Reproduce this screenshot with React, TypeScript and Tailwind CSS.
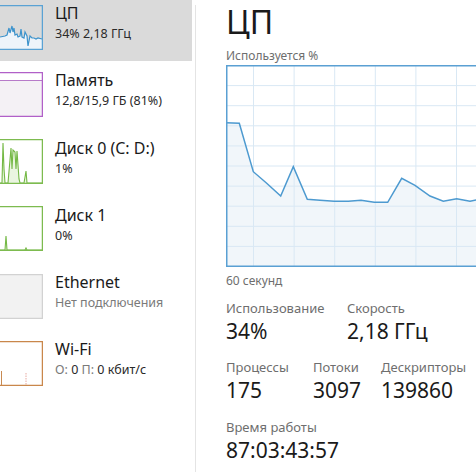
import type React from "react";

const font = { fontFamily: '"Noto Sans", "Open Sans", sans-serif' };

// sidebar sparkline for the CPU tile
const cpuSpark =
  "0,32 5,31 7,30 9,23 10,28 12,21 13,27 14,23 15,30 17,29 18,32 20,31 21,24 22,32 24,33 25,27 27,31 28,41 29,36 30,31 32,33 34,33 36,34 38,33 42,34";

// main CPU history, x/y inside the chart box
const cpuHistory: [number, number][] = [
  [0, 57.7], [13.3, 58.3], [27.3, 106.7], [40.7, 118.3], [54.7, 131], [67.3, 101.7],
  [81.3, 134.3], [94, 135.3], [108.3, 136.3], [122.3, 136.3], [135, 135.3],
  [148.3, 137.3], [161.7, 137.3], [175.7, 113.3], [189, 120.3], [204, 131],
  [217.3, 136.3], [230.7, 133.7], [244, 136.3], [257.3, 133.5], [270, 134],
];

const CpuThumb = () => (
  <svg width="43" height="45" className="block">
    <polygon points={`0,45 ${cpuSpark} 42,45`} fill="#eef4fa" />
    <polyline points={cpuSpark} fill="none" stroke="#3d93cc" strokeWidth="1.2" />
    <path d="M0 0.5H42.5V44.5H0" fill="none" stroke="#5aa2d4" strokeWidth="1.5" />
  </svg>
);

const MemThumb = () => (
  <svg width="43" height="45" className="block">
    <rect x="0" y="8.5" width="42" height="36" fill="#f4f1f5" />
    <line x1="0" y1="8.5" x2="42" y2="8.5" stroke="#b77bc9" strokeWidth="1" />
    <path d="M0 0.5H42.5V44.5H0" fill="none" stroke="#b160c8" strokeWidth="1.5" />
  </svg>
);

const DiskThumb = ({ spikes }: { spikes: string }) => (
  <svg width="43" height="45" className="block">
    <polygon points={`0,44 ${spikes} 42,44`} fill="#eaf5e0" />
    <polyline points={spikes} fill="none" stroke="#74b845" strokeWidth="1.1" />
    <path d="M0 0.5H42.5V44.5H0" fill="none" stroke="#7dbb4f" strokeWidth="1.5" />
  </svg>
);

const EthThumb = () => (
  <svg width="43" height="45" className="block">
    <rect x="0" y="0" width="42" height="44" fill="#f2f2f2" />
    <path d="M0 0.5H42.5V44.5H0" fill="none" stroke="#d2d2d2" strokeWidth="1.5" />
  </svg>
);

const WifiThumb = () => (
  <svg width="43" height="45" className="block">
    <line x1="1.5" y1="30" x2="1.5" y2="44" stroke="#c88a52" strokeWidth="1" />
    <line x1="26" y1="32" x2="26" y2="44" stroke="#e7a9a0" strokeWidth="1" strokeDasharray="1.5 1" />
    <path d="M0 0.5H42.5V44.5H0" fill="none" stroke="#c9874b" strokeWidth="1.5" />
  </svg>
);

type Tile = {
  thumb: React.ReactNode;
  title: string;
  sub: React.ReactNode;
  selected?: boolean;
};

const tiles: Tile[] = [
  { thumb: <CpuThumb />, title: "ЦП", sub: "34% 2,18 ГГц", selected: true },
  { thumb: <MemThumb />, title: "Память", sub: "12,8/15,9 ГБ (81%)" },
  {
    thumb: <DiskThumb spikes="0,44 2,44 3,4 4,30 5,44 8,44 11,9 12,30 13,11 15,13 16,30 17,12 19,40 20,44 24,44 26,32 27,44 42,44" />,
    title: "Диск 0 (C: D:)",
    sub: "1%",
  },
  {
    thumb: <DiskThumb spikes="0,44 5,44 6,30 7,44 25,44 26,42 27,44 42,44" />,
    title: "Диск 1",
    sub: "0%",
  },
  { thumb: <EthThumb />, title: "Ethernet", sub: <span className="text-[#7a7a7a]">Нет подключения</span> },
  {
    thumb: <WifiThumb />,
    title: "Wi-Fi",
    sub: (
      <>
        <span className="text-[#7a7a7a]">О:</span> 0 <span className="text-[#7a7a7a]">П:</span> 0 кбит/с
      </>
    ),
  },
];

const Stat = ({ label, value, w }: { label: string; value: string; w?: string }) => (
  <div className={w}>
    <div className="text-[13px] leading-[18px] text-[#6e6e6e]">{label}</div>
    <div className="text-[21px] leading-[28px] text-[#1a1a1a]">{value}</div>
  </div>
);

const CpuChart = () => {
  const pts = cpuHistory.map(([x, y]) => `${x},${y}`).join(" ");
  return (
    <svg width="262" height="203" className="block">
      <polygon points={`0,201 ${pts} 270,201`} fill="#f1f6fa" />
      {Array.from({ length: 9 }, (_, i) => (
        <line key={`h${i}`} x1="0" x2="262" y1={20.6 + i * 20.1} y2={20.6 + i * 20.1} stroke="#d9e8f4" strokeWidth="1" />
      ))}
      {Array.from({ length: 6 }, (_, i) => (
        <line key={`v${i}`} y1="0" y2="202" x1={27.5 + i * 40.6} x2={27.5 + i * 40.6} stroke="#d9e8f4" strokeWidth="1" />
      ))}
      <polyline points={pts} fill="none" stroke="#4d9ad0" strokeWidth="1.5" />
      <path d="M262 0.75H0.75V201.25H262" fill="none" stroke="#5aa0d3" strokeWidth="1.5" />
    </svg>
  );
};

export default function App() {
  return (
    <div className="flex w-[476px] h-[472px] overflow-hidden bg-white text-[#1a1a1a]" style={font}>
      {/* device list */}
      <div className="w-[195px] shrink-0 flex flex-col -mt-[2px]">
        {tiles.map((t) => (
          <div
            key={t.title}
            className={`h-[63px] mb-[4.3px] w-[192px] flex items-start shrink-0 ${t.selected ? "bg-[#dadada]" : ""}`}
          >
            <div className="mt-[6.5px]">{t.thumb}</div>
            <div className="ml-[12px] mt-[5px]">
              <div className="text-[16px] leading-[21px]">{t.title}</div>
              <div className="text-[12.5px] leading-[18px] mt-[1px] text-[#2a2a2a]">{t.sub}</div>
            </div>
          </div>
        ))}
      </div>

      <div className="w-px shrink-0 mt-[5px] bg-[#e4e4e4]" />

      {/* CPU details */}
      <div className="flex-1 pl-[30px]">
        <div className="text-[32px] leading-[44px]">ЦП</div>
        <div className="text-[12px] leading-[16px] text-[#6e6e6e] mt-[4px]">Используется %</div>
        <div className="mt-[1px] w-[262px]">
          <CpuChart />
        </div>
        <div className="text-[12px] leading-[16px] text-[#6e6e6e] mt-[5px]">60 секунд</div>

        <div className="mt-[10px] flex">
          <Stat label="Использование" value="34%" w="w-[121px]" />
          <Stat label="Скорость" value="2,18 ГГц" />
        </div>
        <div className="mt-[13px] flex">
          <Stat label="Процессы" value="175" w="w-[87px]" />
          <Stat label="Потоки" value="3097" w="w-[68px]" />
          <Stat label="Дескрипторы" value="139860" />
        </div>
        <div className="mt-[14px]">
          <Stat label="Время работы" value="87:03:43:57" />
        </div>
      </div>
    </div>
  );
}
